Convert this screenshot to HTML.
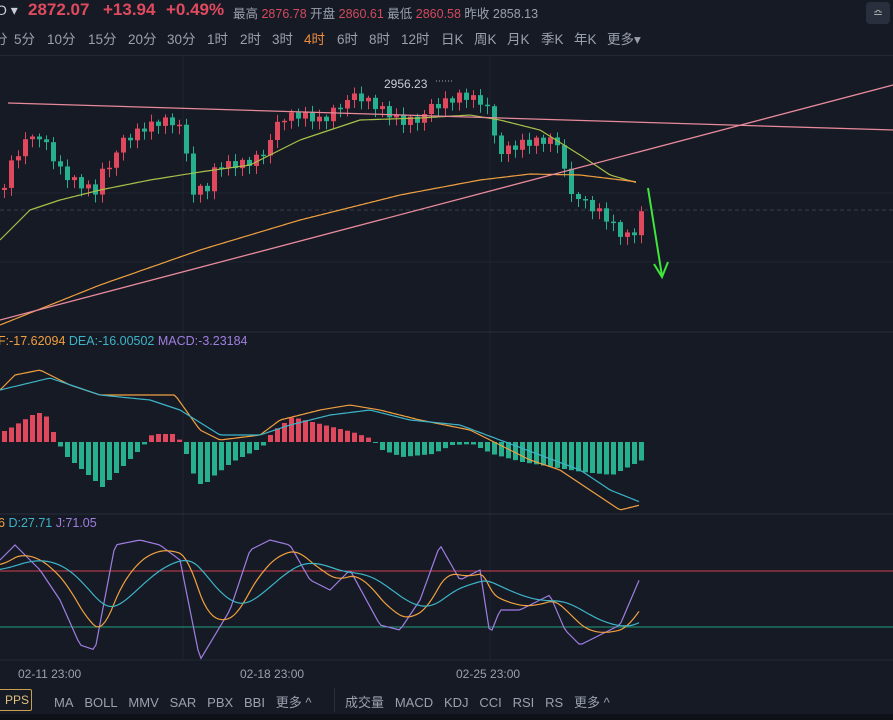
<!DOCTYPE html>
<html><head><meta charset="utf-8"><style>
body{margin:0;width:893px;height:720px;background:#161a25;overflow:hidden;font-family:"Liberation Sans","Noto Sans CJK SC",sans-serif;color:#9aa0ad;position:relative}
.t{position:absolute;white-space:nowrap}
.r span{position:absolute;top:0}
</style></head><body>
<div class="t" style="top:2px;left:-4px;font-size:14px;color:#c8ccd4">O ▾</div>
<div class="t" style="top:0px;left:28px;font-size:17px;color:#e04a5f;font-weight:bold">2872.07</div>
<div class="t" style="top:0px;left:103px;font-size:17px;color:#e04a5f;font-weight:bold">+13.94</div>
<div class="t" style="top:0px;left:166px;font-size:17px;color:#e04a5f;font-weight:bold">+0.49%</div>
<div class="t" style="top:3px;left:233px;font-size:12.5px;color:#9aa0ad">最高 <span style="color:#d24a5c">2876.78</span> 开盘 <span style="color:#d24a5c">2860.61</span> 最低 <span style="color:#d24a5c">2860.58</span> 昨收 2858.13</div>
<div style="position:absolute;left:866px;top:2px;width:24px;height:22px;background:#2a2f3d;border-radius:4px;color:#aaa;font-size:12px;text-align:center;line-height:22px">≏</div>
<div class="t r" style="top:28px;left:0;font-size:13.5px;color:#9aa0ad">
<span style="left:-6px">分</span><span style="left:14px">5分</span><span style="left:47px">10分</span><span style="left:88px">15分</span><span style="left:128px">20分</span><span style="left:167px">30分</span><span style="left:207px">1时</span><span style="left:240px">2时</span><span style="left:272px">3时</span><span style="left:304px;color:#f08a3c">4时</span><span style="left:337px">6时</span><span style="left:369px">8时</span><span style="left:401px">12时</span><span style="left:441px">日K</span><span style="left:474px">周K</span><span style="left:507px">月K</span><span style="left:541px">季K</span><span style="left:574px">年K</span><span style="left:607px">更多▾</span></div>
<div style="position:absolute;top:55px;left:0;width:893px;height:1px;background:#232836"></div>
<svg id="s" width="893" height="720" style="position:absolute;left:0;top:0"></svg>
<div class="t" style="top:334px;left:-2px;font-size:12.5px"><span style="color:#f0a040">F:-17.62094</span> <span style="color:#3cb4c8">DEA:-16.00502</span> <span style="color:#a07ee0">MACD:-3.23184</span></div>
<div class="t" style="top:516px;left:-2px;font-size:12.5px"><span style="color:#f0a040">6</span> <span style="color:#3cb4c8">D:27.71</span> <span style="color:#a07ee0">J:71.05</span></div>
<div class="t" style="top:667px;left:18px;font-size:12px">02-11 23:00</div>
<div class="t" style="top:667px;left:240px;font-size:12px">02-18 23:00</div>
<div class="t" style="top:667px;left:456px;font-size:12px">02-25 23:00</div>
<div class="t" style="top:77px;left:384px;font-size:12px;color:#c8ccd4">2956.23</div>
<div style="position:absolute;left:-4px;top:689px;width:32px;height:20px;border:1px solid #c8a050;border-radius:2px;color:#e0c080;font-size:12px;line-height:20px;text-align:right;padding-right:2px">PPS</div>
<div class="t" style="top:692px;left:54px;font-size:13px">MA&nbsp;&nbsp; BOLL&nbsp;&nbsp; MMV&nbsp;&nbsp; SAR&nbsp;&nbsp; PBX&nbsp;&nbsp; BBI&nbsp;&nbsp; 更多 ^</div>
<div class="t" style="top:692px;left:345px;font-size:13px">成交量&nbsp;&nbsp; MACD&nbsp;&nbsp; KDJ&nbsp;&nbsp; CCI&nbsp;&nbsp; RSI&nbsp;&nbsp; RS&nbsp;&nbsp; 更多 ^</div>
<div style="position:absolute;left:334px;top:688px;width:1px;height:24px;background:#2a2f3d"></div>
<div style="position:absolute;left:0;top:714px;width:893px;height:6px;background:#0e1118"></div>
<script>
(function(){
var s=document.getElementById('s'),h='';
function ip(k,x){for(var i=0;i<k.length-1;i++){if(x>=k[i][0]&&x<=k[i+1][0]){var t=(x-k[i][0])/(k[i+1][0]-k[i][0]);return k[i][1]+t*(k[i+1][1]-k[i][1]);}}return x<k[0][0]?k[0][1]:k[k.length-1][1];}
function pl(k,c,w){var p='';for(var x=k[0][0];x<=k[k.length-1][0];x+=3)p+=x+','+ip(k,x).toFixed(1)+' ';return '<polyline points="'+p+'" fill="none" stroke="'+c+'" stroke-width="'+(w||1.2)+'"/>';}
[193,262].forEach(function(y){h+='<line x1="0" x2="893" y1="'+y+'" y2="'+y+'" stroke="#1f2431"/>';});
[183,490].forEach(function(x){h+='<line x1="'+x+'" x2="'+x+'" y1="56" y2="660" stroke="#1f2431"/>';});
h+='<line x1="0" x2="893" y1="332" y2="332" stroke="#2a2f3d"/><line x1="0" x2="893" y1="514" y2="514" stroke="#2a2f3d"/><line x1="0" x2="893" y1="660" y2="660" stroke="#232836"/>';
h+='<line x1="0" x2="893" y1="210" y2="210" stroke="#3a3f4c" stroke-dasharray="4,3"/>';
h+='<line x1="436" x2="452" y1="81" y2="81" stroke="#aaa" stroke-dasharray="1,2"/>';
var P=[[0,190],[10,160],[30,130],[45,150],[60,175],[80,185],[95,190],[100,170],[120,145],[140,130],[160,120],[175,120],[185,150],[190,195],[205,190],[215,165],[230,165],[250,160],[265,145],[280,120],[300,115],[320,120],[340,100],[360,100],[380,110],[400,120],[420,115],[440,105],[460,95],[480,100],[490,115],[495,150],[500,155],[520,145],[540,140],[555,140],[560,165],[570,190],[580,205],[600,215],[615,230],[620,235],[630,235],[640,210]];
var prev=190;
for(var x=2;x<=640;x+=7){var c=ip(P,x)+((x*37)%11-5)*1.3;var o=prev;var up=c<o;var col=up?'#e0485e':'#26b08e';var tp=Math.min(o,c),bt=Math.max(o,c);if(bt-tp<1.5)bt=tp+1.5;var wt=tp-2-(x*13)%6,wb=bt+2+(x*17)%7;h+='<line x1="'+(x+2.5)+'" x2="'+(x+2.5)+'" y1="'+wt+'" y2="'+wb+'" stroke="'+col+'"/><rect x="'+x+'" y="'+tp+'" width="5" height="'+(bt-tp)+'" fill="'+col+'"/>';prev=c;}
h+=pl([[0,240],[30,210],[60,200],[100,190],[150,180],[200,172],[250,165],[300,140],[360,120],[420,118],[470,115],[500,120],[540,130],[580,155],[610,175],[638,183]],'#a8c048');
h+=pl([[0,325],[100,285],[200,250],[300,220],[400,195],[480,180],[530,174],[580,175],[638,182]],'#f0a040');
h+='<line x1="0" y1="320" x2="893" y2="85" stroke="#e88a9a" stroke-width="1.3"/><line x1="8" y1="103" x2="893" y2="130" stroke="#e88a9a" stroke-width="1.3"/>';
h+='<path d="M648 188 L662 276 M654 264 L662 277 L668 262" fill="none" stroke="#3ee63a" stroke-width="2"/>';
var M=[[0,10],[10,15],[35,30],[45,25],[55,0],[65,-15],[100,-45],[120,-25],[140,-5],[150,8],[170,8],[180,0],[190,-30],[200,-45],[210,-35],[230,-20],[260,-5],[270,10],[290,25],[310,20],[330,15],[350,10],[370,3],[380,-8],[400,-15],[430,-12],[450,-3],[470,-2],[490,-12],[520,-20],[550,-25],[580,-30],[610,-33],[640,-18]];
for(var x=2;x<=640;x+=7){var v=ip(M,x);var col=v>0?'#e0485e':'#26b08e';h+='<rect x="'+x+'" y="'+(v>0?442-v:442)+'" width="5" height="'+Math.max(1,Math.abs(v))+'" fill="'+col+'"/>';}
h+=pl([[0,390],[15,375],[40,370],[70,385],[100,395],[140,395],[175,395],[200,430],[220,440],[260,435],[280,420],[320,410],[350,405],[380,410],[420,420],[470,430],[500,445],[530,460],[560,470],[590,490],[620,510],[640,505]],'#f0a040');
h+=pl([[0,390],[50,378],[100,395],[150,400],[180,410],[220,435],[260,435],[290,425],[330,415],[370,410],[410,420],[460,425],[500,440],[540,455],[580,470],[610,490],[640,502]],'#3cb4c8');
h+='<line x1="0" x2="893" y1="571" y2="571" stroke="#d04050"/><line x1="0" x2="893" y1="627" y2="627" stroke="#20a080"/>';
var J=[[0,560],[15,545],[40,570],[60,600],[80,645],[95,650],[115,545],[140,540],[160,545],[180,560],[200,660],[230,610],[250,550],[270,540],[290,545],[310,580],[330,590],[350,570],[380,625],[400,630],[420,600],[440,545],[460,580],[480,570],[490,635],[500,610],[520,610],[550,595],[565,630],[580,645],[600,635],[620,625],[640,578]];
var jp='',kp='',dp='',k=565,d=570;
for(var x=0;x<=640;x+=3){var j=ip(J,x);k+=(j-k)*0.12;d+=(k-d)*0.1;jp+=x+','+j.toFixed(1)+' ';kp+=x+','+k.toFixed(1)+' ';dp+=x+','+d.toFixed(1)+' ';}
h+='<polyline points="'+jp+'" fill="none" stroke="#a07ee0" stroke-width="1.2"/><polyline points="'+kp+'" fill="none" stroke="#f0a040" stroke-width="1.2"/><polyline points="'+dp+'" fill="none" stroke="#3cb4c8" stroke-width="1.2"/>';
s.innerHTML=h;
})();
</script>
</body></html>
